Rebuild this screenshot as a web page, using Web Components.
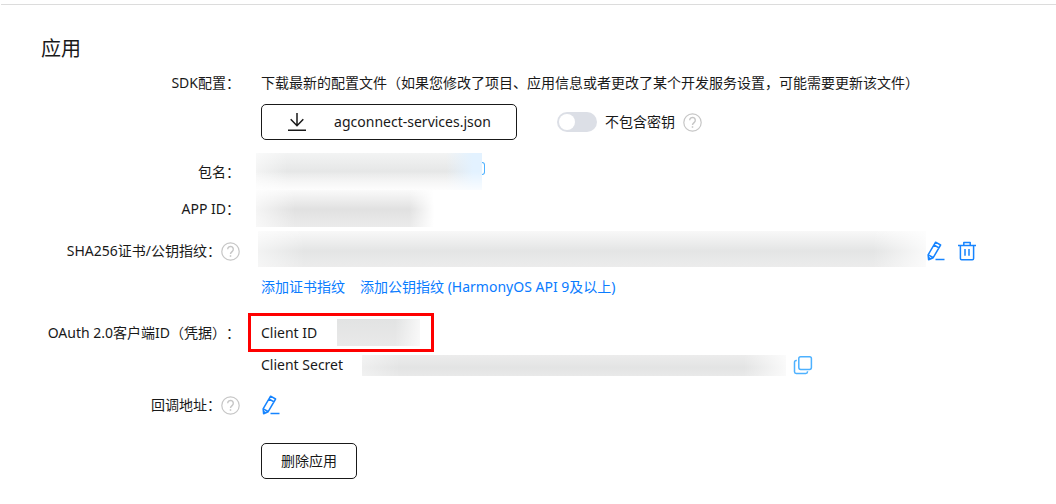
<!DOCTYPE html>
<html lang="zh-CN">
<head>
<meta charset="utf-8">
<meta name="viewport" content="width=device-width, initial-scale=1">
<title>应用</title>
<style>
body {
  margin: 0;
  background: #fff;
  color: #191919;
  font: 400 14px/24px "Noto Sans", "Noto Sans CJK SC", sans-serif;
  text-spacing-trim: space-all;
}
</style>
</head>
<body>
<app-settings></app-settings>

<template id="form-row">
  <style>
    :host { display: grid; grid-template-columns: 240px minmax(0, 1fr); column-gap: 8px; align-items: start; }
    .label { display: flex; align-items: center; justify-content: flex-end; min-height: 24px; white-space: nowrap; }
    .body { padding-left: 13px; }
    :host([flush]) .body { padding-left: 0; }
    :host([middle]) { align-items: center; }
  </style>
  <div class="label"><slot name="label"></slot></div>
  <div class="body"><slot></slot></div>
</template>

<template id="help-tip">
  <style>
    :host { display: inline-flex; }
    button { display: flex; padding: 0; border: 0; background: none; cursor: pointer; }
    svg { display: block; fill: none; stroke: #c6c6c6; stroke-width: 1.2; }
  </style>
  <button type="button" aria-label="帮助">
    <svg width="19" height="19" viewBox="0 0 19 19">
      <circle cx="9.5" cy="9.5" r="8.7"/>
      <path d="M6.7 7.3a2.8 2.8 0 1 1 4.6 2.1c-1.2 1-1.8 1.4-1.8 2.7" stroke-width="1.4"/>
      <path d="M9.5 13.2v1.6" stroke-width="1.5"/>
    </svg>
  </button>
</template>

<template id="icon-button">
  <style>
    :host { display: inline-flex; }
    button { display: flex; padding: 0; border: 0; background: none; cursor: pointer; }
    svg { display: none; fill: none; stroke: #1684ff; stroke-width: 1.5; stroke-linejoin: round; }
    :host([kind="edit"]) .edit, :host([kind="delete"]) .delete, :host([kind="copy"]) .copy { display: block; }
    .copy { stroke: #4db1ff; }
  </style>
  <button type="button">
    <svg class="edit" width="20" height="20" viewBox="0 0 20 20">
      <path d="M9.6 1.2l5 2.8-7.4 12.7-4.6 2.1-.5-5zM8 4l5 2.8M2.3 13.9l4.7 2.6M2.5 16.5l2.1 1.3"/>
      <path d="M9.5 18.5h9"/>
    </svg>
    <svg class="delete" width="20" height="20" viewBox="0 0 20 20">
      <path d="M1 4.5h18M6.8 4.2V1.5h6.4v2.7M3.4 4.5v13q0 1.2 1.2 1.2h10.8q1.2 0 1.2-1.2v-13M8 8v6.8M12 8v6.8"/>
    </svg>
    <svg class="copy" width="20" height="20" viewBox="0 0 20 20">
      <rect x="5.8" y="1.8" width="12.6" height="12.6" rx="1.8"/>
      <path d="M3.8 5.5H3.2q-1.7 0-1.7 1.7v9.6q0 1.7 1.7 1.7h9.6q1.7 0 1.7-1.7v-.6"/>
    </svg>
  </button>
</template>

<template id="toggle-switch">
  <style>
    :host { display: inline-flex; align-items: center; gap: 8px; }
    input {
      appearance: none; flex: none; display: flex; align-items: center;
      width: 40px; height: 20px; margin: 0; padding: 0 2px; box-sizing: border-box;
      border-radius: 10px; background: #dcdfe6; cursor: pointer;
    }
    input::before { content: ""; width: 16px; height: 16px; border-radius: 50%; background: #fff; }
    input:checked { background: #1684ff; justify-content: flex-end; }
  </style>
  <input type="checkbox" role="switch" id="toggle">
  <label for="toggle"><slot></slot></label>
</template>

<template id="masked-value">
  <style>
    :host { display: block; flex: 0 1 auto; }
  </style>
</template>

<template id="outline-button">
  <style>
    :host { display: inline-flex; }
    button {
      display: flex; align-items: center; justify-content: center; height: 36px; padding: 0 19px;
      border: 1px solid #191919; border-radius: 5px; background: #fff; color: inherit;
      font: inherit; white-space: nowrap; cursor: pointer;
    }
    :host([wide]) button { width: 256px; gap: 27px; }
  </style>
  <button type="button"><slot></slot></button>
</template>

<template id="app-settings">
  <style>
    :host { display: block; padding: 4px 0 24px; }
    hr { margin: 0 0 0 1px; border: 0; border-top: 1px solid #dcdcdc; }
    h1 { margin: 32px 0 10px 41px; font-size: 20px; line-height: 24px; font-weight: inherit; }
    .line { display: flex; align-items: center; }
    .download { gap: 40px; margin: 9px 0 13px; }
    .secret-option { gap: 8px; }
    .package { padding-left: 8px; }
    .package masked-value { width: 226px; height: 37px;
      background: linear-gradient(#fff0 50%, #fffc 100%),
        linear-gradient(90deg, #fff8 0, #fff0 14%, #e3f2ff00 84%, #e3f2ff 96%),
        linear-gradient(#f3f4f4, #e6e7e7 50%, #f4f4f4); }
    .sliver { width: 3px; height: 13px; margin-bottom: 6px; box-sizing: border-box;
      border: 1px solid #4db1ff; border-left: 0; border-radius: 0 3px 3px 0; }
    .appid { padding-left: 8px; }
    .appid masked-value { width: 178px; height: 37px;
      background: linear-gradient(90deg, #fffa 0, #fff0 22%, #fff0 86%, #fff 100%),
        linear-gradient(#fafafa, #e1e1e1 52%, #ebebeb); }
    .cert { margin-top: 4px; }
    .prints { padding-left: 10px; }
    .prints masked-value { width: 668px; height: 36px; margin-bottom: 4px;
      background: linear-gradient(90deg, #fff8 0, #fff0 7%, #fff0 92%, #fffc 100%),
        linear-gradient(#f8f8f8, #e4e5e5 55%, #ececec); }
    .prints icon-button:last-child { margin-left: 11px; }
    .links { gap: 15px; margin-top: 4px; }
    a { color: #0a7cff; text-decoration: none; white-space: nowrap; }
    .oauth { margin-top: 14px; }
    .client { width: 186px; height: 39px; box-sizing: border-box; padding-left: 10px;
      border: 3px solid #fe0000; gap: 18px; white-space: nowrap; }
    .client masked-value { width: 83px; height: 27px;
      background: linear-gradient(90deg, #fff0 70%, #fffb 100%), linear-gradient(#e2e3e3, #e9e9e9); }
    .caption { width: 58px; }
    .secret { padding-left: 13px; margin-top: 1px; white-space: nowrap; }
    .secret .caption { width: 101px; }
    .secret masked-value { width: 424px; height: 21px; margin-right: 7px;
      background: linear-gradient(90deg, #fff6 0, #fff0 9%, #fff0 90%, #fffc 100%),
        linear-gradient(#ececec, #e3e4e4 60%, #e9e9e9); }
    .callback { margin-top: 16px; }
    .delete-row { margin-top: 26px; }
  </style>
  <hr>
  <h1>应用</h1>

  <form-row>
    <span slot="label">SDK配置：</span>
    <div>下载最新的配置文件（如果您修改了项目、应用信息或者更改了某个开发服务设置，可能需要更新该文件）</div>
    <div class="line download">
      <outline-button wide>
        <svg width="20" height="20" viewBox="0 0 20 20" fill="none" stroke="#191919" stroke-width="1.5" aria-hidden="true">
          <path d="M10 1v13M3.7 7.2l6.3 6.5 6.3-6.5M1 18.2h18"/>
        </svg>
        <span>agconnect-services.json</span>
      </outline-button>
      <div class="line secret-option">
        <toggle-switch>不包含密钥</toggle-switch>
        <help-tip></help-tip>
      </div>
    </div>
  </form-row>

  <form-row flush middle>
    <span slot="label">包名：</span>
    <div class="line package"><masked-value></masked-value><span class="sliver"></span></div>
  </form-row>

  <form-row flush middle>
    <span slot="label">APP ID：</span>
    <div class="line appid"><masked-value></masked-value></div>
  </form-row>

  <form-row class="cert" flush middle>
    <span slot="label">SHA256证书/公钥指纹：</span>
    <help-tip slot="label"></help-tip>
    <div class="line prints">
      <masked-value></masked-value>
      <icon-button kind="edit" label="编辑"></icon-button>
      <icon-button kind="delete" label="删除"></icon-button>
    </div>
  </form-row>
  <form-row>
    <div class="line links">
      <a href="#certificate">添加证书指纹</a>
      <a href="#public-key">添加公钥指纹 (HarmonyOS API 9及以上)</a>
    </div>
  </form-row>

  <form-row class="oauth" flush middle>
    <span slot="label">OAuth 2.0客户端ID（凭据）：</span>
    <div class="line client"><span class="caption">Client ID</span><masked-value></masked-value></div>
  </form-row>
  <form-row flush>
    <div class="line secret">
      <span class="caption">Client Secret</span><masked-value></masked-value>
      <icon-button kind="copy" label="复制"></icon-button>
    </div>
  </form-row>

  <form-row class="callback" middle>
    <span slot="label">回调地址：</span>
    <help-tip slot="label"></help-tip>
    <div class="line"><icon-button kind="edit" label="编辑"></icon-button></div>
  </form-row>

  <form-row class="delete-row">
    <outline-button>删除应用</outline-button>
  </form-row>
</template>

<script>
class TemplateElement extends HTMLElement {
  constructor() {
    super();
    const template = document.getElementById(this.localName);
    this.attachShadow({ mode: "open" }).append(template.content.cloneNode(true));
  }
}
class FormRow extends TemplateElement {}
class HelpTip extends TemplateElement {}
class ToggleSwitch extends TemplateElement {}
class MaskedValue extends TemplateElement {}
class OutlineButton extends TemplateElement {}
class AppSettings extends TemplateElement {}
class IconButton extends TemplateElement {
  connectedCallback() {
    this.shadowRoot.querySelector("button").setAttribute("aria-label", this.getAttribute("label") || "");
  }
}
customElements.define("form-row", FormRow);
customElements.define("help-tip", HelpTip);
customElements.define("toggle-switch", ToggleSwitch);
customElements.define("masked-value", MaskedValue);
customElements.define("outline-button", OutlineButton);
customElements.define("icon-button", IconButton);
customElements.define("app-settings", AppSettings);
</script>
</body>
</html>
